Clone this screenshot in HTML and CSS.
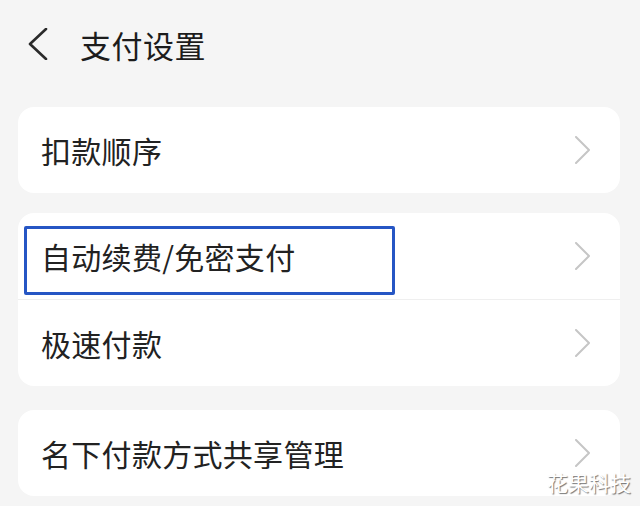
FILE: index.html
```html
<!DOCTYPE html>
<html lang="zh-CN">
<head>
    <meta charset="UTF-8">
    <meta name="viewport" content="width=device-width, initial-scale=1.0">
    <title>支付设置</title>
    <link rel="stylesheet" href="styles.css">
</head>
<body>

    <header class="topbar">
        <svg class="back" width="20" height="32" viewBox="0 0 20 32">
            <polyline points="18,1 2,16 18,31" />
        </svg>
        <h1>支付设置</h1>
    </header>

    <section class="card">
        <div class="row">
            <span>扣款顺序</span>
            <svg class="chev" width="18" height="28" viewBox="0 0 18 28"><polyline points="2,1 15,14 2,27" /></svg>
        </div>
    </section>

    <section class="card">
        <div class="row">
            <span>自动续费/免密支付</span>
            <svg class="chev" width="18" height="28" viewBox="0 0 18 28"><polyline points="2,1 15,14 2,27" /></svg>
        </div>
        <div class="row">
            <span>极速付款</span>
            <svg class="chev" width="18" height="28" viewBox="0 0 18 28"><polyline points="2,1 15,14 2,27" /></svg>
        </div>
        <div class="mark"></div>
    </section>

    <section class="card card-last">
        <div class="row">
            <span>名下付款方式共享管理</span>
            <svg class="chev" width="18" height="28" viewBox="0 0 18 28"><polyline points="2,1 15,14 2,27" /></svg>
        </div>
    </section>

    <div class="watermark">花果科技</div>

</body>
</html>
```

FILE: styles.css
```css
html, body {
    margin: 0;
    padding: 0;
}

body {
    font-family: "Noto Sans CJK SC", "Noto Sans", sans-serif;
    background-color: #f5f5f5;
    color: #222;
    width: 640px;
    height: 506px;
    overflow: hidden;
    position: relative;
}

.topbar {
    display: flex;
    align-items: center;
    height: 88px;
    padding-left: 28px;
    box-sizing: border-box;
}

.topbar h1 {
    margin: 0 0 0 32px;
    font-size: 31px;
    font-weight: 400;
    color: #1c1c1c;
    letter-spacing: 0.5px;
}

.back polyline {
    fill: none;
    stroke: #2a2a2a;
    stroke-width: 2.6;
    stroke-linecap: round;
    stroke-linejoin: round;
}

.card {
    position: relative;
    background: #fff;
    border-radius: 16px;
    margin: 19px 20px 0 18px;
    overflow: hidden;
}

.card + .card {
    margin-top: 20px;
}

.card-last {
    margin-top: 24px !important;
}

.row {
    display: flex;
    align-items: center;
    justify-content: space-between;
    height: 86px;
    padding: 0 28px 0 23px;
    font-size: 30px;
    letter-spacing: 0.3px;
}

.row + .row {
    border-top: 1px solid #efefef;
}

.chev polyline {
    fill: none;
    stroke: #c6c6c6;
    stroke-width: 2;
    stroke-linecap: round;
    stroke-linejoin: round;
}

.mark {
    position: absolute;
    left: 6px;
    top: 13px;
    width: 371px;
    height: 69px;
    border: 3px solid #2656c4;
    border-radius: 2px;
    box-sizing: border-box;
}

.watermark {
    position: absolute;
    right: 9px;
    bottom: 9px;
    font-size: 21px;
    color: #fff;
    text-shadow: 1px 1px 1px rgba(0, 0, 0, 0.55);
}
```
